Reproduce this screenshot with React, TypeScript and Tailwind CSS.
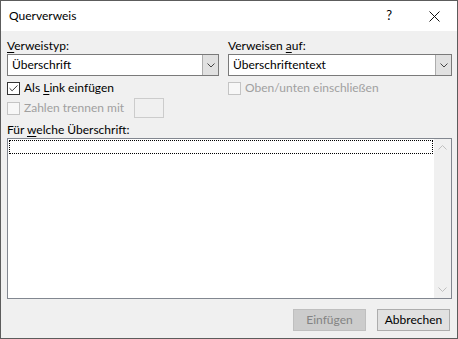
import { Check } from 'lucide-react';

const font = { fontFamily: 'Lato, "Open Sans", sans-serif' };

function U({ children }: { children: string }) {
    return <span className="underline underline-offset-2">{children}</span>;
}

function Select({ value }: { value: string }) {
    return (
        <div className="flex h-[22px] border border-[#7a7a7a] bg-white">
            <div className="flex-1 pl-[4px] leading-[20px] text-black">{value}</div>
            <div className="flex w-[16px] items-center justify-center border-l border-[#adadad] bg-[#e1e1e1]">
                <svg width="8" height="5" viewBox="0 0 8 5">
                    <path d="M0.5 0.5 L4 4 L7.5 0.5" fill="none" stroke="#444" strokeWidth="1" />
                </svg>
            </div>
        </div>
    );
}

function Checkbox({ checked, disabled, label }: { checked?: boolean; disabled?: boolean; label: React.ReactNode }) {
    return (
        <div className="flex items-center gap-[4px]">
            <div
                className={
                    disabled
                        ? 'flex h-[13px] w-[13px] items-center justify-center border border-[#c4c4c4] bg-[#f7f7f7]'
                        : 'flex h-[13px] w-[13px] items-center justify-center border border-[#333333] bg-white'
                }
            >
                {checked && <Check size={11} strokeWidth={2} color="#222" />}
            </div>
            <span className={disabled ? 'text-[#a0a0a0]' : 'text-black'}>{label}</span>
        </div>
    );
}

export default function App() {
    return (
        <div className="flex h-[339px] w-[458px] flex-col border border-[#5c5c5c] bg-[#f0f0f0] text-[12px]" style={font}>
            <div className="flex h-[30px] items-center bg-white pl-[8px] text-black">
                <span className="flex-1">Querverweis</span>
                <span className="mr-[37px] text-[13px]">?</span>
                <svg className="mr-[17px]" width="11" height="11" viewBox="0 0 11 11">
                    <path d="M0.5 0.5 L10.5 10.5 M10.5 0.5 L0.5 10.5" stroke="#111" strokeWidth="1" />
                </svg>
            </div>

            <div className="flex flex-1 flex-col pl-[6px] pr-[5px] pt-[7px] pb-[7px]">
                <div className="flex gap-[9px]">
                    <div className="flex w-[212px] flex-col">
                        <div className="h-[16px] leading-[15px]"><U>V</U>erweistyp:</div>
                        <Select value="Überschrift" />
                        <div className="mt-[3px] h-[16px]">
                            <Checkbox checked label={<>Als <U>L</U>ink einfügen</>} />
                        </div>
                        <div className="mt-[3px] flex h-[20px] items-center">
                            <div className="w-[127px]">
                                <Checkbox disabled label="Zahlen trennen mit" />
                            </div>
                            <div className="h-[20px] w-[30px] border border-[#cccccc] bg-[#f0f0f0]" />
                        </div>
                    </div>
                    <div className="flex flex-1 flex-col">
                        <div className="h-[16px] leading-[15px]">Verweisen <U>a</U>uf:</div>
                        <Select value="Überschriftentext" />
                        <div className="mt-[3px] h-[16px]">
                            <Checkbox disabled label="Oben/unten einschließen" />
                        </div>
                    </div>
                </div>

                <div className="mt-[4px] h-[16px] leading-[15px]">Für <U>w</U>elche Überschrift:</div>
                <div className="flex h-[161px] border border-[#828790] bg-white">
                    <div className="flex-1 p-[1px]">
                        <div className="h-[14px] border border-dotted border-black" />
                    </div>
                    <div className="flex w-[17px] flex-col items-center justify-between bg-[#f0f0f0] py-[6px]">
                        <svg width="9" height="5" viewBox="0 0 9 5">
                            <path d="M0.5 4.5 L4.5 0.5 L8.5 4.5" fill="none" stroke="#c0c0c0" strokeWidth="1" />
                        </svg>
                        <svg width="9" height="5" viewBox="0 0 9 5">
                            <path d="M0.5 0.5 L4.5 4.5 L8.5 0.5" fill="none" stroke="#c0c0c0" strokeWidth="1" />
                        </svg>
                    </div>
                </div>

                <div className="mt-auto flex justify-end gap-[11px] pr-[2px]">
                    <div className="flex h-[22px] w-[73px] items-center justify-center border border-[#bfbfbf] bg-[#cccccc] text-[#838383]">
                        Einfügen
                    </div>
                    <div className="flex h-[22px] w-[73px] items-center justify-center border border-[#adadad] bg-[#e1e1e1] text-black">
                        Abbrechen
                    </div>
                </div>
            </div>
        </div>
    );
}
